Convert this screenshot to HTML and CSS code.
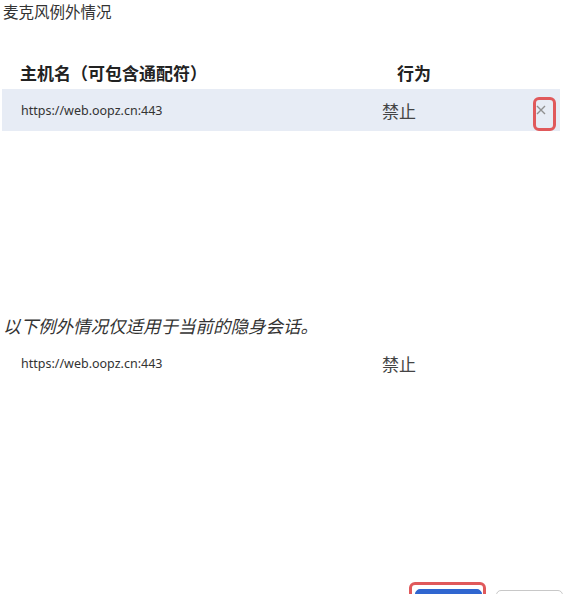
FILE: index.html
```html
<!DOCTYPE html>
<html lang="zh-CN">

<head>
    <meta charset="UTF-8">
    <meta name="viewport" content="width=device-width, initial-scale=1.0">
    <title>麦克风例外情况</title>
    <link rel="stylesheet" href="styles.css">
</head>

<body>
    <main class="dialog">
        <h1 class="dialogTitle">麦克风例外情况</h1>

        <section class="exceptionSection">
            <div class="tableHeader">
                <span>主机名（可包含通配符）</span>
                <span class="headerAction">行为</span>
            </div>
            <div class="exceptionList">
                <div class="exceptionRow selected">
                    <span class="rowHost">https://web.oopz.cn:443</span>
                    <span class="rowAction">禁止</span>
                    <span class="highlight closeHighlight">
                        <button class="closeButton" title="删除">
                            <svg width="10" height="10" viewBox="0 0 10 10">
                                <path d="M1 1 L9 9 M9 1 L1 9" stroke="#909090" stroke-width="1.4" fill="none" />
                            </svg>
                        </button>
                    </span>
                </div>
            </div>
        </section>

        <section class="exceptionSection">
            <h2 class="incognitoNote">以下例外情况仅适用于当前的隐身会话。</h2>
            <div class="exceptionList incognitoList">
                <div class="exceptionRow">
                    <span class="rowHost">https://web.oopz.cn:443</span>
                    <span class="rowAction">禁止</span>
                </div>
            </div>
        </section>

        <footer class="dialogFooter">
            <span class="highlight okHighlight">
                <button class="button button-primary" aria-label="完成"></button>
            </span>
            <button class="button" aria-label="取消"></button>
        </footer>
    </main>
</body>

</html>
```

FILE: styles.css
```css
* {
    font-family: 'Noto Sans', 'Noto Sans CJK SC', sans-serif;
    box-sizing: border-box;
}

html,
body {
    margin: 0;
    overflow: hidden;
}

body {
    color: #333;
    background-color: #fff;
}

.dialogTitle {
    margin: 0;
    padding: 2px 3px;
    font-size: 15.5px;
    line-height: 20px;
    font-weight: 400;
    color: #333;
}

.tableHeader {
    display: grid;
    grid-template-columns: 377px 1fr;
    margin-top: 38px;
    padding-left: 20px;
    height: 24px;
    line-height: 24px;
    font-size: 17px;
    font-weight: 700;
    color: #222;
}

.exceptionList {
    margin: 3px 0 0 2px;
    width: 558px;
    min-height: 225px;
}

.incognitoList {
    margin-top: 4px;
    min-height: 240px;
}

.exceptionRow {
    display: grid;
    grid-template-columns: 361px 1fr auto;
    align-items: center;
    height: 42px;
    padding: 0 4px 0 19px;
}

.exceptionRow.selected {
    background-color: #e7ecf5;
}

.rowHost {
    font-size: 12.5px;
    color: #333;
}

.rowAction {
    font-size: 17px;
    color: #444;
}

.highlight {
    display: inline-flex;
    border: 3px solid #e0595b;
    border-radius: 6px;
}

.closeHighlight {
    align-self: end;
    width: 23px;
    height: 34px;
    padding: 5px 0 0 0;
}

.closeButton {
    display: flex;
    background: none;
    border: none;
    padding: 0;
    cursor: pointer;
}

.incognitoNote {
    margin: 0;
    padding-left: 3px;
    height: 24px;
    line-height: 24px;
    font-size: 17.5px;
    font-weight: 400;
    font-style: italic;
    color: #333;
}

.dialogFooter {
    display: flex;
    justify-content: flex-end;
    align-items: flex-start;
    gap: 10px;
    padding-right: 21px;
}

.okHighlight {
    padding: 4px 1px 0 3px;
}

.button {
    width: 67px;
    height: 32px;
    margin-top: 8px;
    border: 1px solid #c8c8c8;
    border-radius: 5px;
    background-color: #fff;
}

.button-primary {
    margin-top: 0;
    border-color: #2f66d0;
    background-color: #2f66d0;
}
```
